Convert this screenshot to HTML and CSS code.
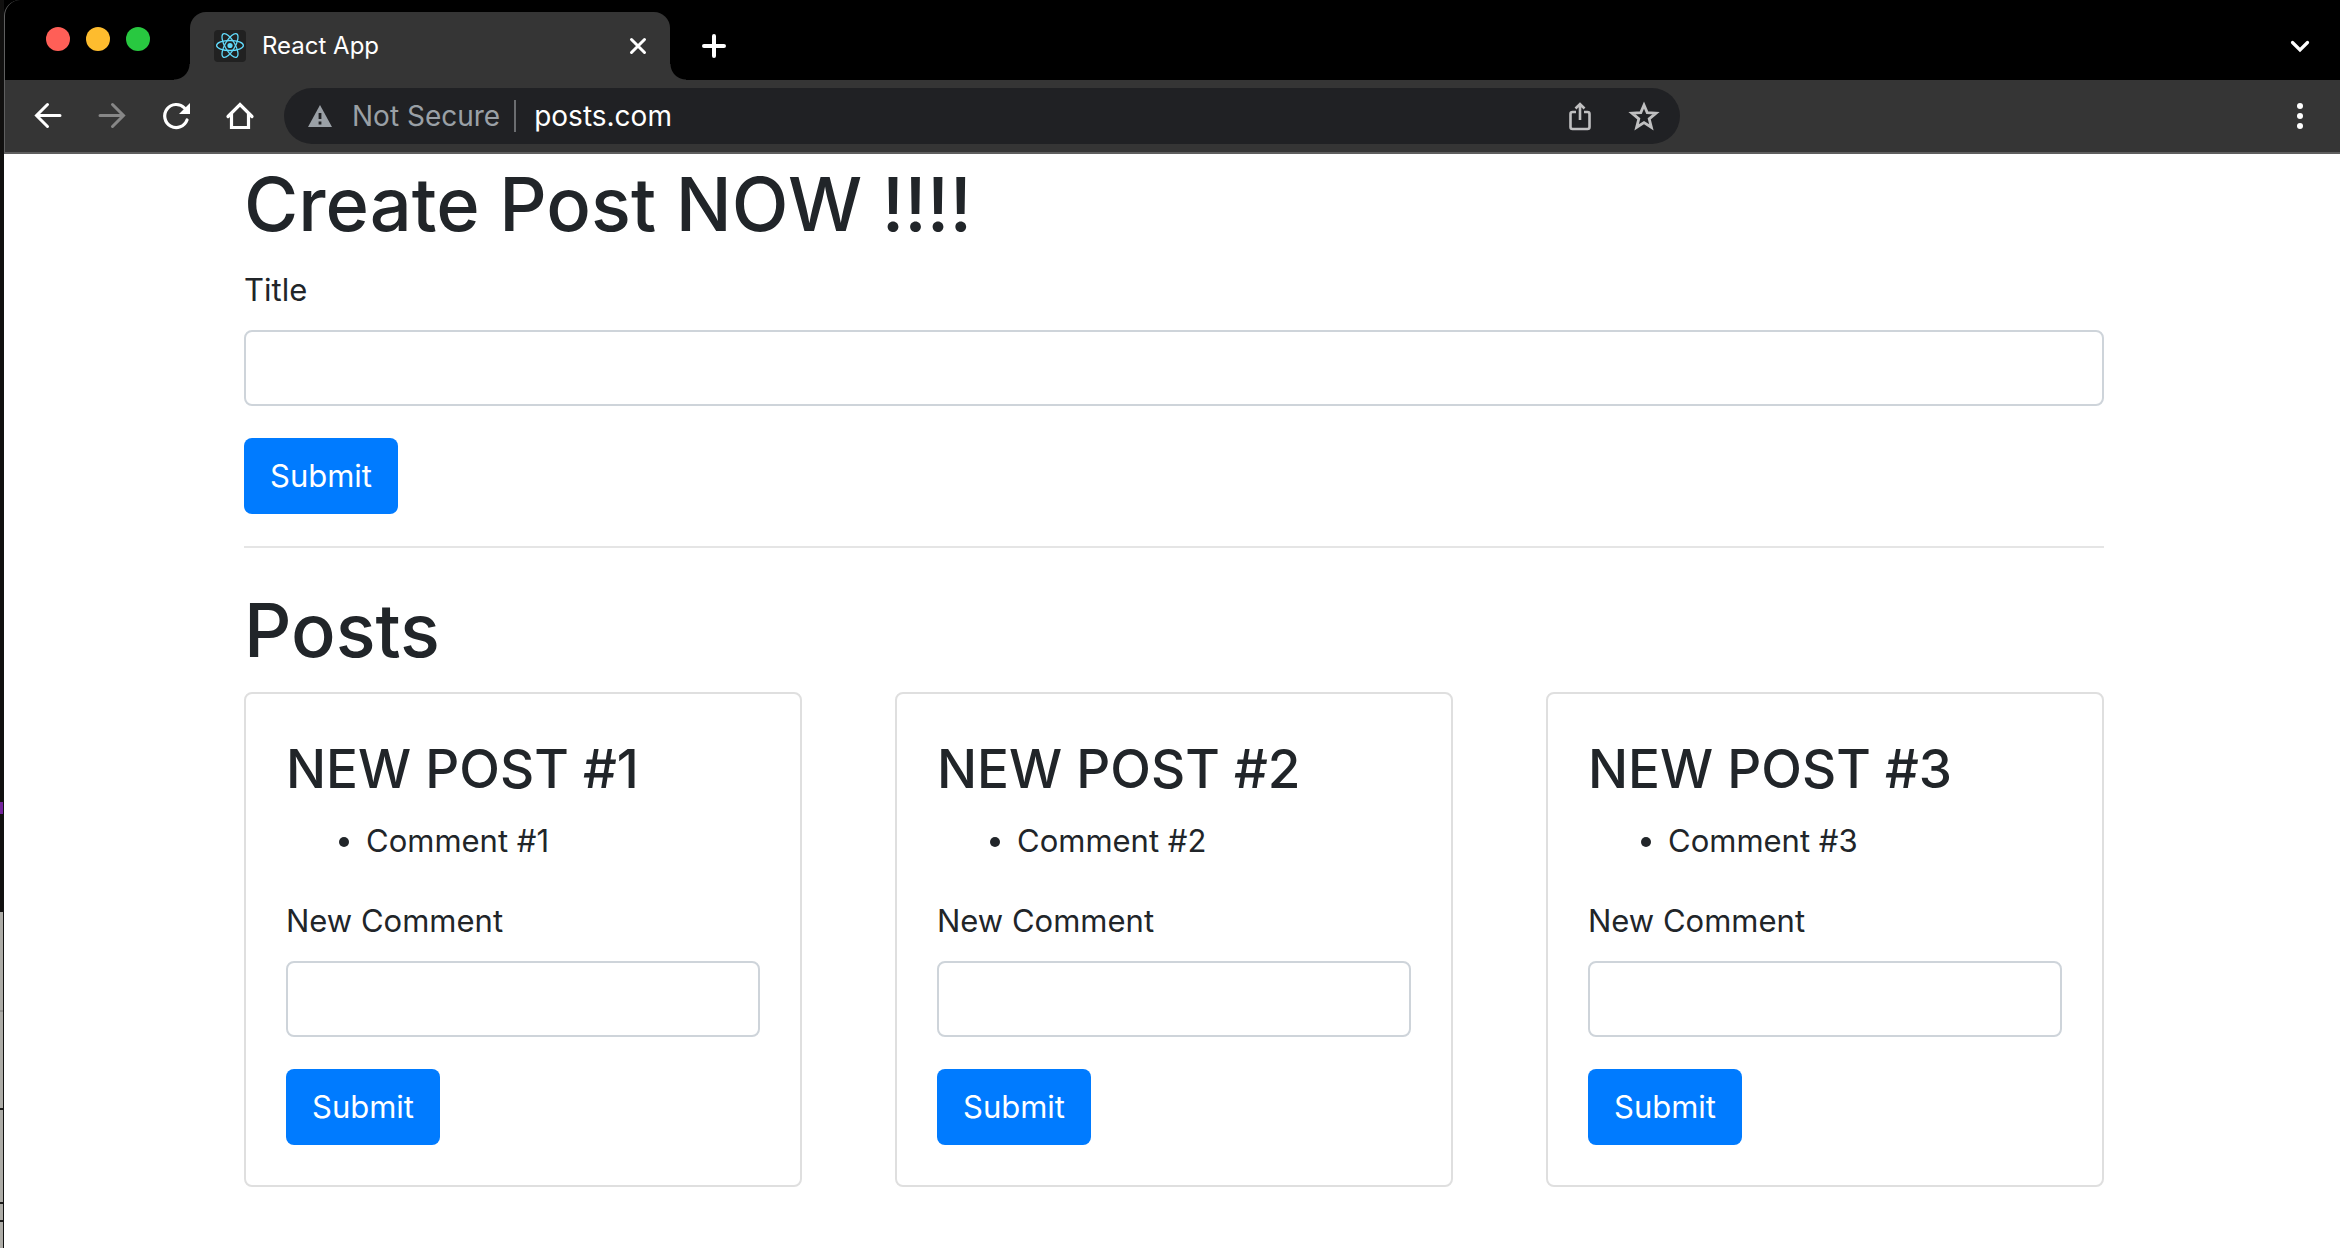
FILE: index.html
```html
<!DOCTYPE html>
<html lang="en">
<head>
<meta charset="utf-8">
<title>React App</title>
<link rel="stylesheet" href="styles.css">
</head>
<body>
<div class="desktop" aria-hidden="true">
  <span class="desktop-dark"></span>
  <span class="desktop-accent"></span>
  <span class="desktop-dark desktop-dark-low"></span>
  <span class="desktop-line desktop-line-soft"></span>
  <span class="desktop-line"></span>
  <span class="desktop-line"></span>
  <span class="desktop-line"></span>
</div>
<div class="window">
  <header class="chrome">
    <div class="tabstrip">
      <div class="lights"><span class="light red"></span><span class="light yellow"></span><span class="light green"></span></div>
      <div class="tab">
        <svg class="favicon" viewBox="0 0 32 32"><rect width="32" height="32" rx="4" fill="#212121"/><g fill="none" stroke="#61dafb" stroke-width="1.3"><ellipse cx="16" cy="15.5" rx="13.4" ry="5"/><ellipse cx="16" cy="15.5" rx="13.4" ry="5" transform="rotate(60 16 15.5)"/><ellipse cx="16" cy="15.5" rx="13.4" ry="5" transform="rotate(120 16 15.5)"/></g><circle cx="16" cy="15.5" r="2.6" fill="#61dafb"/></svg>
        <span class="tab-title">React App</span>
        <button class="icon-button" type="button" aria-label="Close tab"><svg class="icon-small" viewBox="0 0 20 20"><path d="M3.500 3.500L16.500 16.500M16.500 3.500L3.500 16.500" stroke="#fff" stroke-width="3" stroke-linecap="round" fill="none"/></svg></button>
      </div>
      <button class="icon-button new-tab" type="button" aria-label="New tab"><svg class="icon" viewBox="0 0 32 32"><path d="M16 6V26M6 16H26" stroke="#fff" stroke-width="4" stroke-linecap="round"/></svg></button>
      <button class="icon-button tab-search" type="button" aria-label="Search tabs"><svg class="icon-small" viewBox="0 0 20 20"><path d="M2.500 6.500L10 14L17.500 6.500" stroke="#fff" stroke-width="3.200" stroke-linecap="round" fill="none"/></svg></button>
    </div>
    <div class="toolbar">
      <div class="nav">
        <button class="icon-button" type="button" aria-label="Back"><svg class="icon" viewBox="0 0 32 32"><path d="M28 15.500H5M15.500 4.500L4.500 15.500L15.500 26.500" stroke="#fff" stroke-width="3" fill="none" stroke-linecap="round"/></svg></button>
        <button class="icon-button" type="button" aria-label="Forward" disabled><svg class="icon" viewBox="0 0 32 32"><path d="M4 15.500H27M16.500 4.500L27.500 15.500L16.500 26.500" stroke="#878787" stroke-width="3" fill="none" stroke-linecap="round"/></svg></button>
        <button class="icon-button" type="button" aria-label="Reload"><svg class="icon" viewBox="0 0 32 32"><path d="M27 20A11.500 11.500 0 1 1 24.500 8" stroke="#fff" stroke-width="3.200" stroke-linecap="round" fill="none"/><path d="M30 3V14H19Z" fill="#fff"/></svg></button>
        <button class="icon-button" type="button" aria-label="Home"><svg class="icon" viewBox="0 0 32 32"><path d="M4 16.500L16 4.500L28 16.500M7.500 14V27.500H24.500V14" stroke="#fff" stroke-width="3.200" stroke-linecap="round" fill="none"/></svg></button>
      </div>
      <div class="omnibox">
        <svg class="warning" viewBox="0 0 24 24"><path d="M12 1L24 23H0Z" fill="#9aa0a6"/><path d="M12 9V15M12 17.500V20.500" stroke="#202124" stroke-width="2.800"/></svg>
        <span class="security">Not Secure</span>
        <input class="address" type="text" aria-label="Address" value="posts.com">
        <button class="icon-button" type="button" aria-label="Share"><svg class="icon" viewBox="0 0 32 32"><path d="M12 12H8.500Q6.500 12 6.500 14V27Q6.500 29 8.500 29H23.500Q25.500 29 25.500 27V14Q25.500 12 23.500 12H20M16 20V4M11.500 8.500L16 4L20.500 8.500" stroke="#c0c0c1" stroke-width="2.600" fill="none"/></svg></button>
        <button class="icon-button" type="button" aria-label="Bookmark"><svg class="icon" viewBox="0 0 32 32"><path d="M16 5L19.200 12.600L28 13.200L21.200 18.800L23.400 27.300L16 22.600L8.600 27.300L10.800 18.800L4 13.200L12.800 12.600Z" stroke="#c0c0c1" stroke-width="2.800" fill="none"/></svg></button>
      </div>
      <button class="icon-button menu" type="button" aria-label="Menu"><svg class="icon" viewBox="0 0 32 32"><g fill="#fff"><circle cx="16" cy="6" r="3"/><circle cx="16" cy="16" r="3"/><circle cx="16" cy="26" r="3"/></g></svg></button>
    </div>
  </header>
  <main class="page">
    <div class="container">
      <h1 class="title">Create Post NOW !!!!</h1>
      <form class="form">
        <label class="label" for="title">Title</label>
        <input class="control" id="title" type="text">
        <button class="submit" type="submit">Submit</button>
      </form>
      <hr class="rule">
      <h1 class="title">Posts</h1>
      <div class="posts">
        <article class="card">
          <h3 class="card-title">NEW POST #1</h3>
          <ul class="comments"><li>Comment #1</li></ul>
          <form class="form">
            <label class="label" for="comment-1">New Comment</label>
            <input class="control" id="comment-1" type="text">
            <button class="submit" type="submit">Submit</button>
          </form>
        </article>
        <article class="card">
          <h3 class="card-title">NEW POST #2</h3>
          <ul class="comments"><li>Comment #2</li></ul>
          <form class="form">
            <label class="label" for="comment-2">New Comment</label>
            <input class="control" id="comment-2" type="text">
            <button class="submit" type="submit">Submit</button>
          </form>
        </article>
        <article class="card">
          <h3 class="card-title">NEW POST #3</h3>
          <ul class="comments"><li>Comment #3</li></ul>
          <form class="form">
            <label class="label" for="comment-3">New Comment</label>
            <input class="control" id="comment-3" type="text">
            <button class="submit" type="submit">Submit</button>
          </form>
        </article>
      </div>
    </div>
  </main>
</div>
</body>
</html>
```
FILE: styles.css
```css
* { box-sizing: border-box; }
body {
  margin: 0;
  min-height: 100vh;
  display: flex;
  background: #000;
  color: #212529;
  font-family: Inter, "Liberation Sans", sans-serif;
  font-size: 31px;
  line-height: 48px;
}
button, input { font: inherit; }

/* Sliver of desktop left of the window */
.desktop {
  width: 4px;
  flex: none;
  display: flex;
  flex-direction: column;
  background: #adaca7;
  border-right: 1px solid #111;
}
.desktop-dark { height: 802px; background: #11100f; }
.desktop-dark-low { height: 98px; }
.desktop-accent { height: 12px; background: #73249c; }
.desktop-line { height: 2px; margin-top: 92px; background: #1a1a19; }
.desktop-line:nth-child(5) { margin-top: 96px; }
.desktop-line:last-child { margin-top: 16px; }
.desktop-line-soft { margin-top: 98px; background: #93928e; }

.window { flex: 1; min-width: 0; background: #fff; }
.icon-button {
  display: flex;
  flex: none;
  padding: 0;
  border: 0;
  background: none;
}
.icon { width: 32px; height: 32px; }
.icon-small { width: 20px; height: 20px; }

.chrome { background: #000; }
.tabstrip {
  display: flex;
  align-items: center;
  height: 80px;
  padding: 12px 30px 0 41px;
  border-left: 1px solid #5f5f5f;
  border-radius: 16px 16px 0 0;
  background: #000;
}
.lights { display: flex; gap: 16px; padding-bottom: 14px; }
.light { width: 24px; height: 24px; border-radius: 50%; }
.red { background: #ff5f57; }
.yellow { background: #febc2e; }
.green { background: #28c840; }
.tab {
  position: relative;
  display: flex;
  align-items: center;
  width: 480px;
  height: 68px;
  margin-left: 40px;
  padding: 0 22px 0 24px;
  background: #353535;
  border-radius: 16px 16px 0 0;
}
.tab::before, .tab::after {
  content: "";
  position: absolute;
  bottom: 0;
  width: 16px;
  height: 16px;
}
.tab::before { right: 100%; background: radial-gradient(circle at 0 0, transparent 15px, #353535 16px); }
.tab::after { left: 100%; background: radial-gradient(circle at 100% 0, transparent 15px, #353535 16px); }
.favicon { width: 32px; height: 32px; }
.tab-title { flex: 1; margin-left: 16px; color: #fff; font-size: 24px; }
.new-tab { margin-left: 28px; }
.tab-search { margin-left: auto; }

.toolbar {
  display: flex;
  align-items: center;
  height: 74px;
  padding: 0 24px 0 27px;
  background: #353535;
  border-left: 1px solid #5f5f5f;
  border-bottom: 2px solid #5f5f5f;
}
.nav { display: flex; gap: 32px; }
.omnibox {
  display: flex;
  align-items: center;
  gap: 32px;
  width: calc(60% + 26px);
  height: 56px;
  margin-left: 28px;
  padding: 0 20px 0 24px;
  background: #202124;
  border-radius: 28px;
}
.warning { width: 24px; height: 24px; }
.security {
  margin: 0 -14px 0 -12px;
  padding-right: 14px;
  border-right: 2px solid #6b6d70;
  color: #9aa0a6;
  font-size: 28px;
  line-height: 32px;
}
.address {
  flex: 1;
  min-width: 0;
  padding: 0;
  border: 0;
  outline: 0;
  background: none;
  color: #fff;
  font-size: 28px;
}
.menu { margin-left: auto; }

.page { padding-left: 4px; }
.container { max-width: 1920px; margin: 0 auto; padding: 0 30px; }
.title, .card-title { margin: 0 0 12px; font-weight: 500; }
.title { font-size: 74px; line-height: 100px; }
.card-title { font-size: 53px; line-height: 71px; }
.form { display: flex; flex-direction: column; align-items: flex-start; }
.label { margin-bottom: 16px; }
.control {
  width: 100%;
  height: 76px;
  margin-bottom: 32px;
  padding: 12px 24px;
  border: 2px solid #ced4da;
  border-radius: 8px;
  background: #fff;
  color: #495057;
}
.submit {
  height: 76px;
  padding: 0 26px;
  border: 0;
  border-radius: 8px;
  background: #007bff;
  color: #fff;
}
.rule { margin: 32px 0; border: 0; border-top: 2px solid #e5e5e5; }
.posts { display: flex; justify-content: space-between; }
.card {
  width: 30%;
  margin-bottom: 40px;
  padding: 40px;
  border: 2px solid #dfdfdf;
  border-radius: 8px;
}
.comments { margin: 0 0 32px; padding-left: 80px; }
```
